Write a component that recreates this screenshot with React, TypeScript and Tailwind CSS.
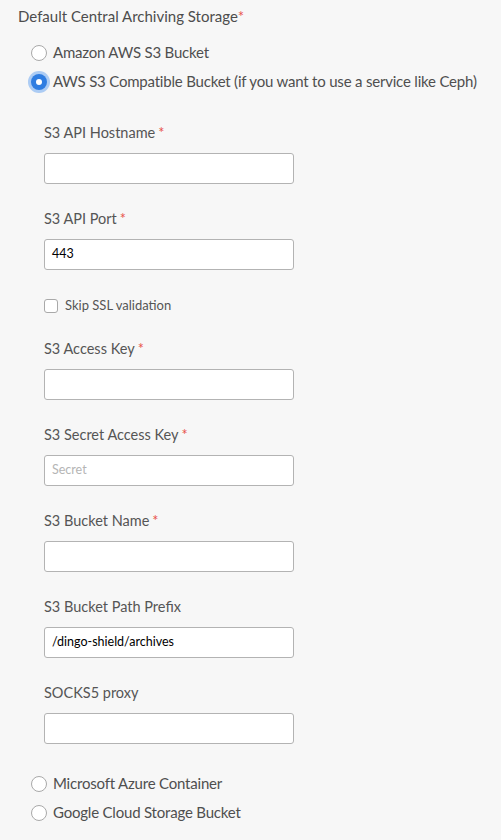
const font = { fontFamily: "Lato, 'Noto Sans', sans-serif" };

function Req() {
  return <span className="ml-[3px] text-[#e8534a]">*</span>;
}

function Radio({ label, checked }: { label: string; checked?: boolean }) {
  return (
    <label className="flex h-[29px] items-center whitespace-nowrap">
      {checked ? (
        <span className="flex h-[16px] w-[16px] shrink-0 items-center justify-center rounded-full bg-[#2f7de1] shadow-[0_0_0_3px_rgba(80,150,240,0.45)]">
          <span className="h-[6px] w-[6px] rounded-full bg-white" />
        </span>
      ) : (
        <span className="h-[16px] w-[16px] shrink-0 rounded-full border border-[#a9a9a9] bg-white" />
      )}
      <span className="ml-[6px] text-[15px] tracking-[-0.2px] text-[#4f4f4f]">{label}</span>
    </label>
  );
}

function Field({
  label,
  required,
  value,
  placeholder,
}: {
  label: string;
  required?: boolean;
  value?: string;
  placeholder?: string;
}) {
  return (
    <div className="flex flex-col">
      <div className="flex h-[20px] items-center text-[14.5px] text-[#555]">
        {label}
        {required ? <Req /> : null}
      </div>
      <div className="mt-[10px] flex h-[31px] w-[250px] items-center rounded-[3px] border border-[#b3b3b3] bg-white px-[7px] text-[12.5px]">
        {value ? (
          <span className="text-black">{value}</span>
        ) : placeholder ? (
          <span className="text-[#b5b5b5]">{placeholder}</span>
        ) : null}
      </div>
    </div>
  );
}

export default function App() {
  return (
    <div className="min-h-[840px] w-[501px] bg-[#f7f7f7]" style={font}>
      <div className="px-[18px] pt-[5px]">
        <div className="flex h-[22px] items-center text-[15px] text-[#4d4d4d]">
          Default Central Archiving Storage
          <span className="text-[#e8534a]">*</span>
        </div>
        <div className="mt-[11px] pl-[13px]">
          <Radio label="Amazon AWS S3 Bucket" />
          <Radio label="AWS S3 Compatible Bucket (if you want to use a service like Ceph)" checked />
        </div>
        <div className="ml-[26px] mt-[27px] flex flex-col gap-[25px]">
          <Field label="S3 API Hostname" required />
          <div>
            <Field label="S3 API Port" required value="443" />
            <label className="mt-[28px] flex h-[16px] items-center">
              <span className="h-[14px] w-[14px] rounded-[3px] border border-[#a9a9a9] bg-white" />
              <span className="ml-[7px] text-[13px] text-[#555]">Skip SSL validation</span>
            </label>
          </div>
          <Field label="S3 Access Key" required />
          <Field label="S3 Secret Access Key" required placeholder="Secret" />
          <Field label="S3 Bucket Name" required />
          <Field label="S3 Bucket Path Prefix" value="/dingo-shield/archives" />
          <Field label="SOCKS5 proxy" />
        </div>
        <div className="mt-[25px] pl-[13px]">
          <Radio label="Microsoft Azure Container" />
          <Radio label="Google Cloud Storage Bucket" />
        </div>
      </div>
    </div>
  );
}
